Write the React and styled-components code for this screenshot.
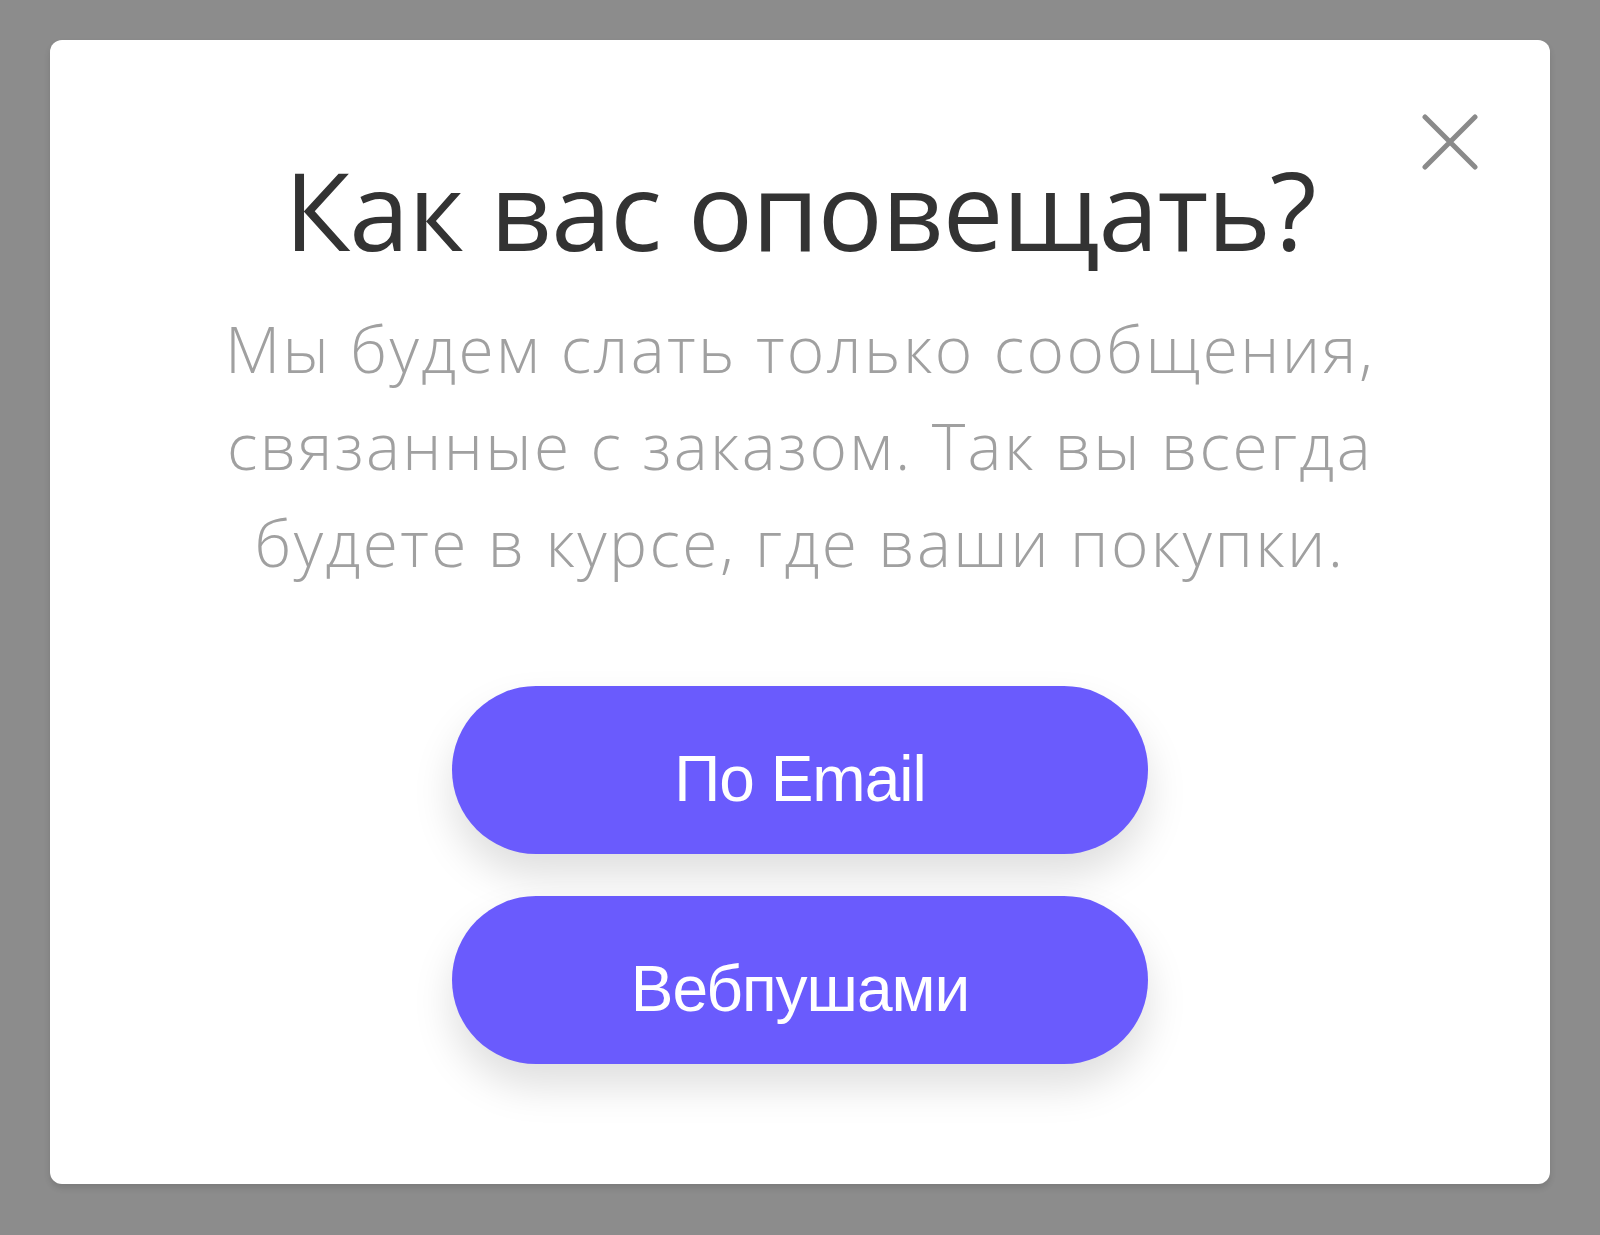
import React from 'react';
import styled, { createGlobalStyle } from 'styled-components';

const GlobalStyle = createGlobalStyle`
  html, body {
    margin: 0;
    padding: 0;
    background: #8c8c8c;
  }
`

const Backdrop = styled.div`
  width: 1600px;
  height: 1235px;
  box-sizing: border-box;
  padding: 40px 50px 51px;
  display: flex;
`

const Modal = styled.div`
  position: relative;
  flex: 1;
  background: #fff;
  border-radius: 12px;
  box-shadow: 0 4px 6px rgba(0, 0, 0, 0.12);
  display: flex;
  flex-direction: column;
  align-items: center;
  padding-top: 116px;
  font-family: 'Open Sans', 'Noto Sans', sans-serif;
`

const Close = styled.button`
  position: absolute;
  top: 74px;
  right: 72px;
  width: 56px;
  height: 56px;
  padding: 0;
  border: none;
  background: none;
  cursor: pointer;
  display: flex;
`

const Title = styled.h2`
  margin: 0;
  font-size: 108px;
  line-height: 1;
  font-weight: 400;
  color: #333;
  letter-spacing: -1px;
`

const Text = styled.p`
  margin: 36px 0 0;
  text-align: center;
  font-size: 64px;
  line-height: 97px;
  font-weight: 300;
  letter-spacing: 2.4px;
  color: #a0a0a0;
`

const Actions = styled.div`
  margin-top: 95px;
  display: flex;
  flex-direction: column;
  gap: 42px;
`

const Action = styled.button`
  width: 696px;
  height: 168px;
  border: none;
  border-radius: 84px;
  background: #6a5bfd;
  color: #fff;
  font-family: 'Liberation Sans', Arial, sans-serif;
  font-size: 64px;
  letter-spacing: -1px;
  padding-top: 18px;
  box-shadow: 0 22px 40px rgba(0, 0, 0, 0.13);
  cursor: pointer;
`

const CloseIcon = () => (
  <svg width="56" height="56" viewBox="0 0 56 56">
    <path d="M3 3L53 53M53 3L3 53" stroke="#8a8a8a" strokeWidth="5" strokeLinecap="round" />
  </svg>
);

const App = () => (
  <>
    <GlobalStyle />
    <Backdrop>
      <Modal>
        <Close aria-label="Закрыть">
          <CloseIcon />
        </Close>
        <Title>Как вас оповещать?</Title>
        <Text>
          Мы будем слать только сообщения,
          <br />
          связанные с заказом. Так вы всегда
          <br />
          будете в курсе, где ваши покупки.
        </Text>
        <Actions>
          <Action>По Email</Action>
          <Action>Вебпушами</Action>
        </Actions>
      </Modal>
    </Backdrop>
  </>
);

export default App;
